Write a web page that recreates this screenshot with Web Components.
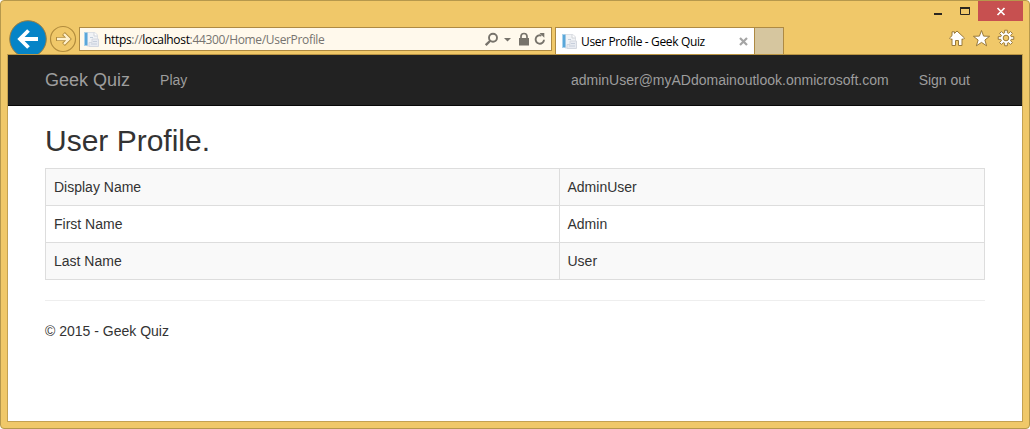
<!DOCTYPE html>
<html lang="en">
<head>
<meta charset="utf-8">
<title>User Profile - Geek Quiz</title>
<style>
html,body{margin:0;height:100%;overflow:hidden;background:#fff}
</style>
</head>
<body>
<browser-window>
  <window-controls slot="controls"></window-controls>
  <browser-toolbar slot="toolbar"></browser-toolbar>
  <site-navbar>
    <span slot="brand">Geek Quiz</span>
    <span slot="links">Play</span>
    <span slot="user">adminUser@myADdomainoutlook.onmicrosoft.com</span>
    <span slot="user">Sign out</span>
  </site-navbar>
  <page-content>
    <span slot="title">User Profile.</span>
    <profile-row shaded><span slot="name">Display Name</span><span>AdminUser</span></profile-row>
    <profile-row><span slot="name">First Name</span><span>Admin</span></profile-row>
    <profile-row shaded><span slot="name">Last Name</span><span>User</span></profile-row>
    <span slot="footer">© 2015 - Geek Quiz</span>
  </page-content>
</browser-window>
<script>
function define(name, html) {
  const t = document.createElement('template');
  t.innerHTML = html;
  customElements.define(name, class extends HTMLElement {
    constructor() {
      super();
      this.attachShadow({ mode: 'open' }).append(t.content.cloneNode(true));
    }
  });
}

define('browser-window', `
<style>
:host{display:flex;flex-direction:column;box-sizing:border-box;width:1030px;height:429px;background:#f0c869;border:1px solid #b6984c;border-radius:4px;overflow:hidden}
.view{flex:1;margin:0 6px 6px;border:1px solid #c3a152;border-top-color:#b99443;background:#fff;overflow:hidden}
</style>
<slot name="controls"></slot>
<slot name="toolbar"></slot>
<div class="view"><slot></slot></div>`);

define('window-controls', `
<style>
:host{display:flex;justify-content:flex-end;height:19px;padding-right:6px}
svg{display:block}
.close{width:45px;height:20px;background:#c75050}
</style>
<svg width="50" height="20"><path d="M6 13h8" stroke="#2b2620" stroke-width="2"/><path d="M32.500 7.500h9v6h-9z" fill="none" stroke="#2b2620"/><path d="M32 7h10" stroke="#2b2620" stroke-width="2"/></svg>
<div class="close"><svg width="45" height="20"><path d="M19.500 7l7 7M26.500 7l-7 7" stroke="#fff" stroke-width="1.700"/></svg></div>`);

define('page-icon', `
<style>:host{display:block;flex:none;width:17px;height:17px}svg{display:block}</style>
<svg width="17" height="17" viewBox="0 0 17 17">
<path d="M4 1.500h8l2.500 2.500v11H4z" fill="#f1f3f6" stroke="#dde0e5"/>
<path d="M11 1.500V5h3.500" fill="#fff" stroke="#d0d4da"/>
<path d="M7 6.500h3" stroke="#c2cedb"/>
<path d="M9 8h6.500v7.500H6v-4h3z" fill="#e8ebf1" stroke="#d4d8e0"/>
<path d="M10 10.500h4M8 13h6" stroke="#c6cedb"/>
<path d="M1 1.500h3.500v13H1z" fill="#5aa7d9"/><path d="M1 1.500h1v13H1z" fill="#a8d3ee"/>
</svg>`);

define('address-bar', `
<style>
:host{display:flex;align-items:center;box-sizing:border-box;width:473px;height:24px;background:#fff9ec;border:1px solid #ae8a43;padding:0 4px 0 3px;font:12px/22px "Open Sans","Noto Sans",sans-serif;color:#000}
.url{margin-left:4px;padding-top:2px;flex:1;white-space:nowrap;letter-spacing:-.33px}
.dim{color:#767470}
svg{display:block}
</style>
<page-icon></page-icon>
<div class="url">https<span class="dim">://</span>localhost<span class="dim">:44300/Home/UserProfile</span></div>
<svg width="64" height="22" viewBox="483 28 64 22" fill="none" stroke="#77736b">
<circle cx="493" cy="37.700" r="4" stroke-width="1.900"/><path d="M490 41l-4.300 4.200" stroke-width="2.400"/>
<path d="M504 38h7l-3.500 3.600z" fill="#77736b" stroke="none"/>
<path d="M519 38h10v7.500h-10z" fill="#77736b" stroke="none"/><path d="M521 38v-1.500a3 3 0 0 1 6 0V38" stroke-width="1.700"/>
<path d="M541.500 35.700a4.200 4.200 0 1 0 2.500 4" stroke-width="1.900"/><path d="M540 33.200h4.800v4.800z" fill="#77736b" stroke="none" transform="translate(-.5 -.3)"/>
</svg>`);

define('browser-tab', `
<style>
:host{display:flex;align-items:center;box-sizing:border-box;width:200px;height:27px;background:#fff;border:1px solid #ae8a43;border-bottom:0;padding:1px 6px 0 5px;font:12px/24px "Open Sans","Noto Sans",sans-serif;color:#000}
.t{margin-left:3px;flex:1;white-space:nowrap;letter-spacing:-.36px}
svg{display:block}
</style>
<page-icon></page-icon><div class="t"><slot></slot></div>
<svg width="9" height="9"><path d="M1 1l7 7M8 1L1 8" stroke="#a5a5a5" stroke-width="2.200"/></svg>`);

define('browser-toolbar', `
<style>
:host{display:flex;height:34px;overflow:hidden;padding-left:8px}
svg{display:block;flex:none}
.nav{width:70px}
address-bar{margin-top:7px;flex:none}
browser-tab{margin:7px 0 0 3px;flex:none}
.new{flex:none;box-sizing:border-box;width:29px;height:27px;margin-top:7px;background:#d6c69f;border:1px solid #ae8a43;border-left:0;border-bottom:0}
.tools{margin-left:auto}
</style>
<svg class="nav" width="70" height="34" viewBox="9 20 70 34">
<circle cx="28" cy="39" r="18.300" fill="#0584c7" stroke="#9b7e42"/>
<path d="M20 39h18M28.500 30.500L20 39l8.500 8.500" fill="none" stroke="#fff" stroke-width="3.800"/>
<circle cx="63" cy="39" r="12.500" fill="none" stroke="#b28c3d" stroke-width="1.200"/>
<path d="M56 39h12M63.500 33.500L69 39l-5.500 5.500" fill="none" stroke="#b28c3d" stroke-width="4"/>
<path d="M57 39h11M64 34l5 5-5 5" fill="none" stroke="#fff1cd" stroke-width="2.300"/>
</svg>
<address-bar></address-bar>
<browser-tab>User Profile - Geek Quiz</browser-tab>
<div class="new"></div>
<svg class="tools" width="81" height="34" viewBox="948 20 81 34" fill="#fff" stroke="#9a7a3a" stroke-linejoin="round">
<path d="M957 31l7.500 7-1.500 1.600-1-.8v6.700h-3.500v-5h-3v5H952v-6.700l-1 .8-1.500-1.600 2.500-2.300v-3.900h2.500v1.600z"/>
<path d="M981.500 30.500l2.100 5.600 6 .2-4.700 3.700 1.700 5.800-5.100-3.400-5.100 3.400 1.700-5.800-4.700-3.700 6-.2z"/>
<path id="gear"/>
<circle cx="1006" cy="38" r="2.800" fill="#f0c869"/>
</svg>`);

define('site-navbar', `
<style>
:host{display:block;height:50px;background:#222;border-bottom:1px solid #080808;font:14px/20px "Liberation Sans",Arial,sans-serif;color:#9d9d9d}
.c{width:940px;margin:0 auto;display:flex;height:50px;align-items:center}
.b{font-size:18px;margin-right:30px}
.u{margin-left:auto;display:flex;gap:30px;padding-right:15px}
</style>
<div class="c"><div class="b"><slot name="brand"></slot></div><slot name="links"></slot><div class="u"><slot name="user"></slot></div></div>`);

define('profile-row', `
<style>
:host{display:grid;grid-template-columns:513px 1fr;border-bottom:1px solid #ddd}
:host([shaded]){background:#f9f9f9}
div{padding:8px}
div+div{border-left:1px solid #ddd;padding-left:7.500px}
</style>
<div><slot name="name"></slot></div><div><slot></slot></div>`);

define('page-content', `
<style>
:host{display:block;width:940px;margin:0 auto;font:14px/20px "Liberation Sans",Arial,sans-serif;color:#333}
h2{font-weight:400;font-size:30px;line-height:33px;margin:18px 0 11px}
.table{border:1px solid #ddd;border-bottom:0}
hr{margin:20px 0;border:0;border-top:1px solid #eee}
</style>
<h2><slot name="title"></slot></h2>
<div class="table"><slot></slot></div>
<hr><footer><slot name="footer"></slot></footer>`);

/* Settings gear: eight teeth around a ring. */
const points = [];
for (let i = 0; i < 8; i++) {
  for (const [r, off] of [[5.4, -14], [7.9, -10], [7.9, 10], [5.4, 14]]) {
    const a = (i * 45 + off) * Math.PI / 180;
    points.push((1006 + r * Math.cos(a)).toFixed(2) + ' ' + (38 + r * Math.sin(a)).toFixed(2));
  }
}
document.querySelector('browser-toolbar').shadowRoot.getElementById('gear')
  .setAttribute('d', 'M' + points.join('L') + 'Z');
</script>
</body>
</html>
